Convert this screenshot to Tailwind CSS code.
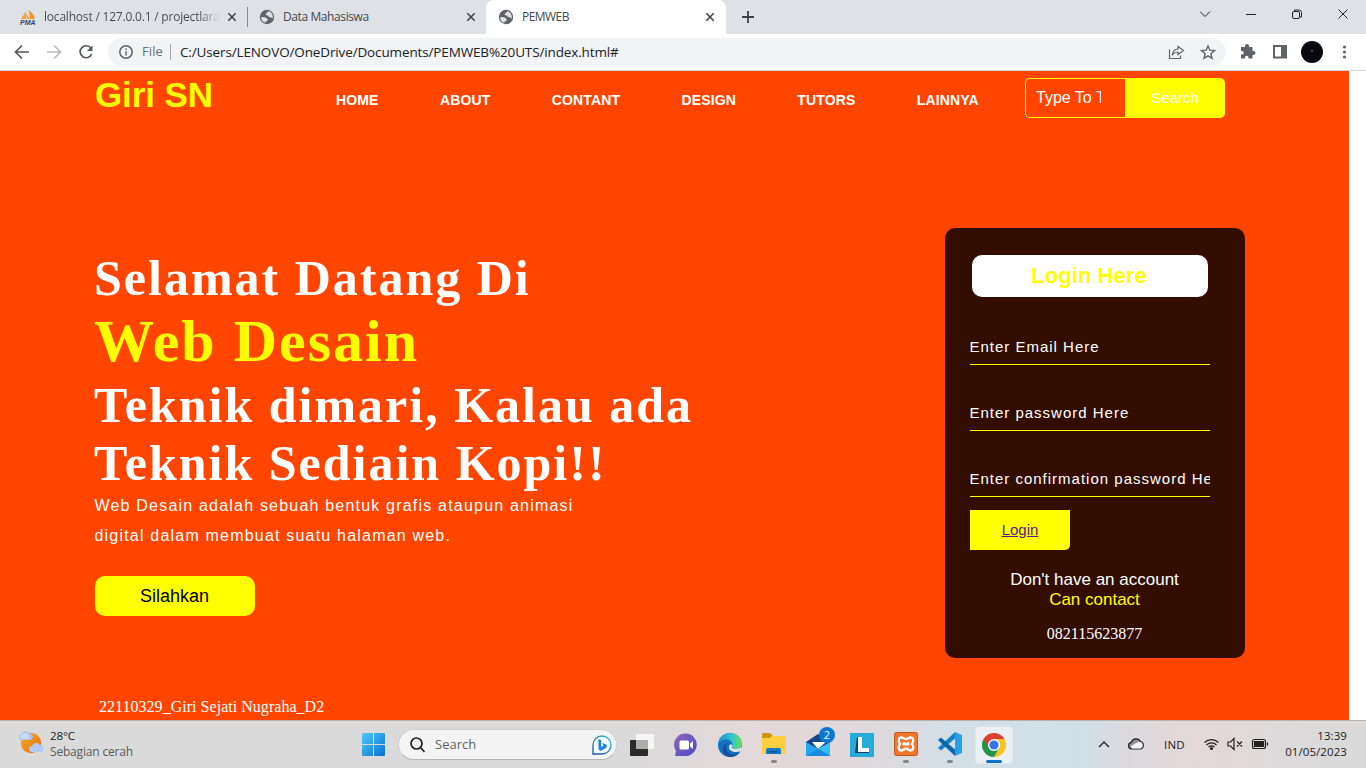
<!DOCTYPE html>
<html lang="id">
<head>
<meta charset="utf-8">
<title>PEMWEB</title>
<script src="https://cdn.jsdelivr.net/npm/@tailwindcss/browser@4"></script>
</head>
<body class="w-[1366px] h-[768px] overflow-hidden flex flex-col bg-white font-['Liberation_Sans',Arial,sans-serif]">
<svg class="hidden">
  <symbol id="globe" viewBox="0 0 16 16"><circle cx="8" cy="8" r="7.2" fill="#5f6368"/><path d="M2.2 8.2c1.7-.5 3.5-.2 4.9.5.9.5.9 1.300 1.700 1.500l-.3 1.500-1.800.7-.3 1.300C3.900 13.200 2.100 11 2.200 8.200zM8.800 2.200l-.5 1.500-1.700 1 .4 1.500 1.800.3 1.200 1.600 2.200.4 1.500 1.200c.5-2.600-.3-5.800-3.300-7.100z" fill="#dee1e6"/></symbol>
  <symbol id="close" viewBox="0 0 10 10"><path d="M1.300 1.300l7.400 7.400M8.700 1.300L1.300 8.700" stroke="#3c4043" stroke-width="1.500" fill="none"/></symbol>
</svg>

<!-- Tab strip -->
<div class="h-[34px] shrink-0 bg-[#dee1e6] flex font-['Open_Sans','Noto_Sans',sans-serif] text-[12px] text-[#45484c]">
  <div class="w-[247px] flex items-center pl-5">
    <svg class="w-4 h-4 shrink-0" viewBox="0 0 16 16"><path d="M1 10L6 2v8zM6.500 10V4l3 6z" fill="#f8a23a"/><path d="M8 1c4 2 6 5 7 9H9.500C10 6 9.500 4 8 1z" fill="#f6921e"/><text x="0" y="15.500" font-size="6.500" font-weight="bold" font-style="italic" textLength="15.500" lengthAdjust="spacingAndGlyphs" fill="#39406f" font-family="Liberation Sans">PMA</text></svg>
    <span class="ml-2 w-[176px] overflow-hidden whitespace-nowrap tracking-[-0.2px] bg-linear-to-r from-[#45484c] from-88% to-transparent bg-clip-text text-transparent">localhost / 127.0.0.1 / projectlara</span>
    <svg class="ml-[7px] w-[10px] h-[10px] shrink-0"><use href="#close"/></svg>
  </div>
  <div class="w-px h-5 mt-[7px] bg-[#878a8e]"></div>
  <div class="w-[238px] flex items-center pl-[11px]">
    <svg class="w-4 h-4 shrink-0"><use href="#globe"/></svg>
    <span class="ml-2 w-[183px] whitespace-nowrap tracking-[-0.4px]">Data Mahasiswa</span>
    <svg class="w-[10px] h-[10px] shrink-0"><use href="#close"/></svg>
  </div>
  <div class="w-[240px] flex items-center pl-3 bg-white rounded-t-lg">
    <svg class="w-4 h-4 shrink-0"><use href="#globe"/></svg>
    <span class="ml-2 w-[183px] whitespace-nowrap tracking-[-0.55px]">PEMWEB</span>
    <svg class="w-[10px] h-[10px] shrink-0"><use href="#close"/></svg>
  </div>
  <svg class="ml-[16px] mt-[11px] w-3 h-3" viewBox="0 0 12 12"><path d="M6 0v12M0 6h12" stroke="#3c4043" stroke-width="1.800"/></svg>
  <svg class="ml-auto w-[166px] h-[34px]" viewBox="0 0 166 34" fill="none" stroke="#222" stroke-width="1"><path d="M0 11.500l5 5 5-5M46 14.500h10M94.500 11.500v-1.500h4.500q2.500 0 2.500 2.500v4.500h-1.500"/><rect x="92.500" y="11.500" width="7" height="7" rx="1.500"/><path d="M138.500 9.500l9 9M147.500 9.500l-9 9"/></svg>
</div>

<!-- Toolbar -->
<div class="h-[37px] shrink-0 flex items-center bg-white border-b border-[#d5d7da] font-['Open_Sans','Noto_Sans',sans-serif]">
  <svg class="w-[108px] h-9 shrink-0" viewBox="0 0 108 36" fill="none" stroke-width="1.700"><path d="M29 18H16M22 11.500L15.500 18l6.500 6.500" stroke="#54585d"/><path d="M47 18h13M54 11.500l6.500 6.500-6.500 6.500" stroke="#b9bbbd"/><path d="M91 14.200A6 6 0 1 0 91.700 20" stroke="#54585d"/><path d="M92.500 11.500v5.500H87z" fill="#54585d"/></svg>
  <div class="w-[1118px] h-7 rounded-full bg-[#f1f3f4] flex items-center pl-[11px]">
    <svg class="w-[14px] h-[14px]" viewBox="0 0 14 14" fill="none" stroke="#5f6368" stroke-width="1.500"><circle cx="7" cy="7" r="6.200"/><path d="M7 6.200v4.200M7 3.400v1.600"/></svg>
    <span class="ml-[9px] w-[28px] text-[13px] tracking-[0.100px] text-[#6a6e73]">File</span>
    <span class="w-px h-4 bg-[#a5a8ab]"></span>
    <span class="ml-[9px] text-[13.500px] tracking-[-0.135px] text-[#202124] whitespace-nowrap">C:/Users/LENOVO/OneDrive/Documents/PEMWEB%20UTS/index.html#</span>
    <svg class="ml-auto mr-[10px] w-[48px] h-5" viewBox="0 0 48 20" fill="none" stroke="#5f6368" stroke-width="1.200"><path d="M1.500 7.500v9h11v-3M10 4.500l5.500 4-5.500 4v-2.500c-3 0-4 .8-5.500 2.700.2-3.700 2-5.500 5.500-5.700z"/><path d="M40 4l1.800 4.200 4.700.4-3.600 3.100 1.100 4.600-4-2.400-4 2.400 1.100-4.600-3.600-3.100 4.700-.4z" stroke-width="1.400"/></svg>
  </div>
  <svg class="w-[140px] h-9 shrink-0" viewBox="0 0 140 36"><path d="M15 14h4v-1a2 2 0 0 1 4 0v1h3.500v4h1a2 2 0 0 1 0 4h-1v3.500h-4v-1a1.800 1.800 0 0 0-3.600 0v1H15v-4h1a1.800 1.800 0 0 0 0-3.600h-1z" fill="#5f6368" transform="translate(0 -1)"/><rect x="48" y="12" width="12" height="11.500" fill="none" stroke="#5f6368" stroke-width="2"/><path d="M55 12h5v12h-5z" fill="#5f6368"/><circle cx="86" cy="18" r="11" fill="#08080f"/><circle cx="86" cy="17" r=".8" fill="#9aa"/><g fill="#5f6368"><circle cx="118.500" cy="13" r="1.600"/><circle cx="118.500" cy="18" r="1.600"/><circle cx="118.500" cy="23" r="1.600"/></g></svg>
</div>

<!-- Page -->
<main class="w-[1349px] h-[649px] shrink-0 bg-[#ff4500] pl-[95px] text-white flex flex-col">
  <header class="h-[58px] flex items-start">
    <h2 class="w-[241px] text-[35px] leading-[40px] font-bold text-[#ff0] mt-[4px] tracking-[-0.100px]">Giri SN</h2>
    <nav class="w-[689px] flex gap-[61.300px] mt-[21px] text-[14px] leading-4 font-bold tracking-[0.150px]">
      <a>HOME</a><a>ABOUT</a><a>CONTANT</a><a>DESIGN</a><a>TUTORS</a><a>LAINNYA</a>
    </nav>
    <div class="flex mt-[7px]">
      <div class="w-[100px] h-10 border border-r-0 border-[#ff0] rounded-l-[5px] px-[10px] text-[16px] leading-[38px]"><div class="w-[65px] overflow-hidden whitespace-nowrap">Type To Text</div></div>
      <button class="w-[100px] h-10 bg-[#ff0] rounded-r-[5px] text-[15px]">Search</button>
    </div>
  </header>
  <div class="flex">
    <section class="w-[850px] pt-[121px]">
      <h1 class="-ml-px font-['Liberation_Serif',serif] font-bold text-[50px] tracking-[2px] whitespace-nowrap">
        <span class="block h-[58px] leading-[57px]">Selamat Datang Di</span>
        <span class="block h-[69px] leading-[67px] text-[60px] text-[#ff0]">Web Desain</span>
        <span class="block h-[58px] leading-[57px]">Teknik dimari, Kalau ada</span>
        <span class="block h-[56px] leading-[56px]">Teknik Sediain Kopi!!</span>
      </h1>
      <p class="-ml-[0.500px] text-[16px] leading-[30px] tracking-[1.200px]">Web Desain adalah sebuah bentuk grafis ataupun animasi<br>digital dalam membuat suatu halaman web.</p>
      <button class="mt-[25px] block w-[160px] h-10 rounded-[10px] bg-[#ff0] pr-px text-black text-[18px]">Silahkan</button>
      <p class="mt-[81px] pl-1 font-['Liberation_Serif',serif] text-[16px] leading-[20px] tracking-[0.030px]">22110329_Giri Sejati Nugraha_D2</p>
    </section>
    <form class="mt-[99px] w-[300px] h-[430px] rounded-[10px] bg-[#330e00] px-[25px] pt-[27px]">
      <h2 class="ml-[2px] w-[236px] h-[42px] rounded-[10px] bg-white text-[#ff0] text-[22px] leading-[42px] font-bold text-center tracking-[0.050px] pr-[2px]">Login Here</h2>
      <div class="mt-[32px] w-[240px] h-9 border-b border-[#ff0] text-[15px] leading-[36px] tracking-[1px] overflow-hidden whitespace-nowrap -indent-[0.600px]">Enter Email Here</div>
      <div class="mt-[30px] w-[240px] h-9 border-b border-[#ff0] text-[15px] leading-[36px] tracking-[1px] overflow-hidden whitespace-nowrap -indent-[0.600px]">Enter password Here</div>
      <div class="mt-[30px] w-[240px] h-9 border-b border-[#ff0] text-[15px] leading-[36px] tracking-[1px] overflow-hidden whitespace-nowrap -indent-[0.600px]">Enter confirmation password Here</div>
      <button type="button" class="mt-[13px] block w-[100px] h-10 bg-[#ff0] rounded-br-[5px] text-[15px] text-[#551a8b] underline">Login</button>
      <p class="mt-[20px] text-[17px] leading-5 text-center pr-px">Don't have an account<br><span class="text-[#ff0]">Can contact</span></p>
      <p class="mt-[14px] pr-px text-center text-[16px] leading-5 font-['Liberation_Serif',serif]">082115623877</p>
    </form>
  </div>
</main>

<!-- Taskbar -->
<footer class="h-12 shrink-0 border-t border-[#b9b3b0] flex items-center font-['Open_Sans','Noto_Sans',sans-serif] text-[11.500px] text-[#1a1a1a] bg-[linear-gradient(90deg,#dadada_0,#dadada_630px,#e3d8da_740px,#e0d8db_860px,#d2dfe7_960px,#cfdfe8_1080px,#dcd9dd_1130px,#e5d7d8_1200px,#dcdadb_1290px,#dadada_1366px)]">
  <svg class="ml-[18px] w-[26px] h-[26px] shrink-0 mb-[5px]" viewBox="0 0 26 26"><defs><linearGradient id="sun" x2="1" y2="1"><stop stop-color="#f3b21e"/><stop offset="1" stop-color="#e8691b"/></linearGradient></defs><circle cx="13" cy="14" r="10.200" fill="url(#sun)"/><path d="M4 11a3 3 0 0 1 0-6 4.500 4.500 0 0 1 8-.5A3.300 3.300 0 0 1 12 11z" fill="#a9c4ef"/><path d="M4 10a2 2 0 0 1 0-4 4 4 0 0 1 4-2c2 0 3 2 3 6z" fill="#c9daf7"/><path d="M14 23a3 3 0 0 1 0-6 4.500 4.500 0 0 1 8-1 3.500 3.500 0 0 1 0 7z" fill="#b3cbf4"/></svg>
  <div class="ml-[6px] w-[309px] leading-4 pb-[1px]"><div class="tracking-[-0.100px]">28°C</div><div class="text-[#5b5b5b] text-[12px] tracking-[-0.180px]">Sebagian cerah</div></div>
  <svg class="ml-[3px] w-[23px] h-[23px] shrink-0" viewBox="0 0 23 23"><defs><linearGradient id="win" x2="1" y2="1"><stop stop-color="#4fc9fb"/><stop offset="1" stop-color="#0872d0"/></linearGradient></defs><path d="M0 1q0-1 1-1h10v11H0zM12 0h10q1 0 1 1v10H12zM0 12h11v11H1q-1 0-1-1zM12 12h11v10q0 1-1 1H12z" fill="url(#win)"/></svg>
  <div class="ml-[13px] w-[219px] h-[31px] rounded-full bg-[#f4f4f4] border border-[#cfcfcf] border-b-[#b5b5b5] flex items-center pl-[11px] shrink-0">
    <svg class="w-[15px] h-4" viewBox="0 0 15 16" fill="none" stroke="#222" stroke-width="1.700"><circle cx="6.500" cy="6.500" r="5.500"/><path d="M10.500 10.500l4 4.500"/></svg>
    <span class="ml-[10px] text-[13px] text-[#626262]">Search</span>
    <svg class="ml-auto mr-[4px] w-5 h-5" viewBox="0 0 20 20"><defs><linearGradient id="bg" x1="1" x2="0" y2="1"><stop stop-color="#32bbdf"/><stop offset="1" stop-color="#184aa8"/></linearGradient></defs><path d="M1 19V10a9 9 0 1 1 9 9z" fill="#f5fbff" stroke="url(#bg)" stroke-width="1.300"/><path d="M6.500 4l2.700 1v7l2.300-1.200L10.200 8l4 1.500c1.200 1 .8 2.500-.5 3.500L9 16l-2.500-1.500z" fill="#1985df"/></svg>
  </div>
  <!-- Pinned applications -->
  <div class="ml-[3px] flex items-center h-full shrink-0">
    <div class="w-[44px] flex justify-center"><svg class="w-6 h-6" viewBox="0 0 24 24"><rect y="7" width="18" height="16" rx="1" fill="#2b2b2a"/><rect x="6" y="1" width="18" height="15" rx="1" fill="#f6f6f6"/><path d="M6 7h12v9H6z" fill="#adadab"/></svg></div>
    <div class="w-[44px] flex justify-center"><svg class="w-6 h-6" viewBox="0 0 24 24"><defs><linearGradient id="chat" x2="1" y2="1"><stop stop-color="#9164b5"/><stop offset="1" stop-color="#484cc7"/></linearGradient></defs><path d="M1 23l1-5A11.300 11.300 0 1 1 12 23z" fill="url(#chat)"/><rect x="5.500" y="7.500" width="9.500" height="9" rx="1.500" fill="#fff"/><path d="M16 10.500l3-2.500v8l-3-2.500z" fill="#fff"/></svg></div>
    <div class="w-[44px] flex justify-center"><svg class="w-6 h-6" viewBox="0 0 24 24"><defs><linearGradient id="edge" x2="1"><stop stop-color="#198ed5"/><stop offset=".6" stop-color="#35c7c9"/><stop offset="1" stop-color="#6fdd50"/></linearGradient></defs><circle cx="12" cy="12" r="12" fill="#126fc1"/><path d="M0 12C1 4 6 0 12 0c7 0 12 5 12 10 0 4-3 6-6 6-4 0-5-2-3.500-4C15 8 10 6 7 6.500 4 7 1 9 0 12z" fill="url(#edge)"/><path d="M14.500 12c-1.500 2-.5 4 3.500 4 2.500 0 4.500-1 5.500-3v6l-1.200-.8c-2 1-7 1.500-10-1-1.800-1.500-2-4.500.2-6z" fill="#dfe0e3"/><path d="M9 10c-2.500 4-.5 10.500 5 11.500 3 .3 6-.8 8-3-2 4-6 5.500-10 5.500-5-1-8-5-7-9.500.5-2.200 2-3.700 4-4.500z" fill="#164f98"/></svg></div>
    <div class="w-[44px] h-full flex flex-col items-center pt-[11px]"><svg class="w-6 h-6 shrink-0" viewBox="0 0 24 24"><path d="M0 2q0-1 1-1h7l3 3v4H0z" fill="#cf950f"/><path d="M0 7q0-1 1-1h7l2-2h13q1 0 1 1v16q0 1-1 1H1q-1 0-1-1z" fill="#ffcf40"/><path d="M4 22v-4q0-2 2-2h11q2 0 2 2v4z" fill="#1479ca"/><path d="M7 19h9v1.500H7z" fill="#075591"/></svg><i class="mt-[4px] w-[6px] h-[3px] rounded-full bg-[#878484]"></i></div>
    <div class="w-[44px] flex justify-center relative"><svg class="w-6 h-6" viewBox="0 0 24 24"><path d="M0 9l12-8 12 8v14H0z" fill="#124884"/><path d="M6 9h14l-8 7z" fill="#fff"/><path d="M0 9l24 14H0z" fill="#27a5ed"/><path d="M24 9v14L12 16z" fill="#36bdf5"/><path d="M0 23l12-7 12 7z" fill="#168bdf"/></svg><span class="absolute left-[23px] -top-[6px] w-4 h-4 rounded-full bg-[#0878d2] text-white text-[11px] leading-4 text-center">2</span></div>
    <div class="w-[44px] flex justify-center"><svg class="w-6 h-6" viewBox="0 0 24 24"><path d="M0 0h24v24H0z" fill="#25acd8"/><path d="M7 4h5v11h7v5H5z" fill="#173d69"/><path d="M8 4h4v11h7v4H8z" fill="#fff"/></svg></div>
    <div class="w-[44px] h-full flex flex-col items-center pt-[11px]"><svg class="w-6 h-6 shrink-0" viewBox="0 0 24 24"><rect x=".5" y=".5" width="23" height="23" rx="2" fill="#ef762a" stroke="#c05a1c"/><path d="M7.500 5.500c2 0 2.500 1.500 4.500 1.500s2.500-1.500 4.500-1.500c3 0 3.500 4 1.500 6.500 2 2.500 1.500 6.500-1.500 6.500-2 0-2.500-2-4.500-2s-2.500 2-4.500 2c-3 0-3.500-4-1.500-6.500-2-2.500-1.500-6.500 1.500-6.500zM10 10v3.500M14 10v3.500M8.500 12h7" fill="none" stroke="#fff" stroke-width="2.300"/></svg><i class="mt-[4px] w-[6px] h-[3px] rounded-full bg-[#878484]"></i></div>
    <div class="w-[44px] h-full flex flex-col items-center pt-[11px]"><svg class="w-6 h-6 shrink-0" viewBox="0 0 24 24"><path d="M17 0l7 3v18l-7 3z" fill="#27a0eb"/><path d="M17 0v6.500L3 18.500 0 16z" fill="#1580c7"/><path d="M17 24v-6.500L3 5.500 0 8z" fill="#0968ad"/></svg><i class="mt-[4px] w-[6px] h-[3px] rounded-full bg-[#878484]"></i></div>
    <div class="ml-[3px] w-[38px] h-[38px] rounded bg-[#eaf0f3] border border-[#e0e8ed] flex flex-col items-center pt-[6px]"><svg class="w-6 h-6 shrink-0" viewBox="0 0 24 24"><path d="M1.600 6A12 12 0 0 1 22.400 6L12 12z" fill="#dd4033"/><path d="M22.400 6A12 12 0 0 1 12 24l5.200-9L12 6z" fill="#fac420"/><path d="M1.600 6A12 12 0 0 0 12 24l5.200-9H12z" fill="#21964b"/><path d="M1.600 6l5.200 9 5.200-9h10.400L17 3 7 1z" fill="#dd4033"/><circle cx="12" cy="12" r="6" fill="#fff"/><circle cx="12" cy="12" r="4.600" fill="#3774e8"/></svg><i class="mt-[3px] w-4 h-[3px] shrink-0 rounded-full bg-[#0a73ca]"></i></div>
  </div>
  <!-- System tray -->
  <svg class="ml-auto w-[50px] h-5 shrink-0" viewBox="0 0 50 20"><path d="M4 12l5-5 5 5" fill="none" stroke="#222" stroke-width="1.400"/><path d="M36.500 14a3.400 3.400 0 0 1-.2-6.700A5 5 0 0 1 45.500 6.500a3.900 3.900 0 0 1 0 7.500z" fill="#929292" stroke="#222" stroke-width="1.200"/><path d="M37.500 13.500c-2-1-2-3 1-4 2-1 4-3 7-2.500 3 .5 3 6 0 6.500z" fill="#f2f2f2"/></svg>
  <span class="ml-[19px] w-[22px] text-[11.500px] tracking-[0.200px]">IND</span>
  <svg class="ml-[17px] w-[66px] h-5 shrink-0" viewBox="0 0 66 20" fill="none" stroke="#222" stroke-width="1.200"><path d="M1.500 7.500a10 10 0 0 1 14 0M3.500 10a7 7 0 0 1 10 0M5.500 12.200a4.200 4.200 0 0 1 6 0"/><circle cx="8.500" cy="13.500" r="1" fill="#222"/><path d="M25 7h2.500l3.500-3.500v11L27.500 11H25zM34 6.500l5 5M39 6.500l-5 5"/><rect x="49.500" y="4.500" width="13" height="9" rx="2"/><path d="M51.500 6.500h9v5h-9z" fill="#222"/><path d="M64.500 7.500v3"/></svg>
  <div class="ml-[11px] mr-[19px] w-[67px] text-right leading-4 pb-[1px] whitespace-nowrap tracking-[0.080px]"><div>13:39</div><div>01/05/2023</div></div>
</footer>
</body>
</html>
